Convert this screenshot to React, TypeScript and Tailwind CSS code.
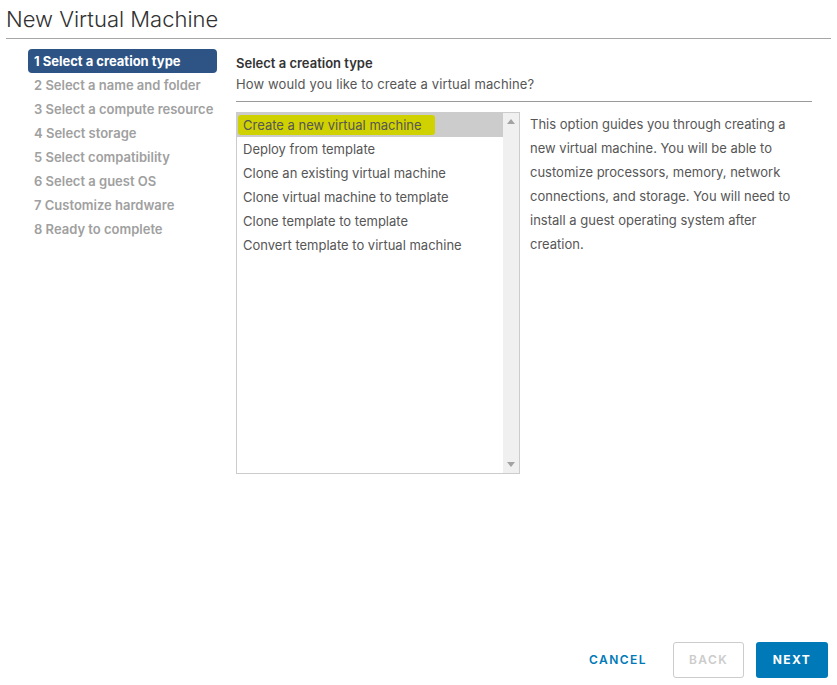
const STEPS = [
  "1 Select a creation type",
  "2 Select a name and folder",
  "3 Select a compute resource",
  "4 Select storage",
  "5 Select compatibility",
  "6 Select a guest OS",
  "7 Customize hardware",
  "8 Ready to complete",
];

const TYPES = [
  "Create a new virtual machine",
  "Deploy from template",
  "Clone an existing virtual machine",
  "Clone virtual machine to template",
  "Clone template to template",
  "Convert template to virtual machine",
];

export default function App() {
  return (
    <div className="flex h-[685px] w-[837px] flex-col bg-white font-['Inter',sans-serif] text-[13px] text-[#565656]">
      <div className="mx-[6px] border-b border-[#a6a6a6] pt-[4px] pb-[4px]">
        <h1 className="text-[22px] leading-[30px] font-light text-[#313131]">New Virtual Machine</h1>
      </div>

      <div className="flex flex-1 pt-[10px]">
        <ul className="ml-[28px] w-[189px] flex-none">
          {STEPS.map((s, i) => (
            <li
              key={s}
              className={
                i === 0
                  ? "rounded-[4px] bg-[#2d5484] px-[6px] leading-[24px] font-bold whitespace-nowrap text-white"
                  : "px-[6px] leading-[24px] font-semibold whitespace-nowrap text-[#a0a0a0]"
              }
            >
              {s}
            </li>
          ))}
        </ul>

        <div className="ml-[19px] w-[576px] flex-none">
          <div className="border-b border-[#9a9a9a] pt-[4px] pb-[6px]">
            <div className="leading-[20px] font-semibold text-[#333]">Select a creation type</div>
            <div className="leading-[22px] tracking-[0.01em]">How would you like to create a virtual machine?</div>
          </div>

          <div className="mt-[10px] flex">
            <div className="flex h-[362px] w-[284px] flex-none border border-[#cccccc]">
              <ul className="flex-1">
                {TYPES.map((t, i) => (
                  <li key={t} className={i === 0 ? "bg-[#cccccc] px-[6px] leading-[24px]" : "px-[6px] leading-[24px]"}>
                    {i === 0 ? (
                      <span className="-ml-[5px] inline-block rounded-[3px] bg-[#d0d100] pr-[13px] pl-[5px] leading-[20px]">{t}</span>
                    ) : (
                      t
                    )}
                  </li>
                ))}
              </ul>
              <div className="flex w-[16px] flex-none flex-col items-center justify-between bg-[#f0f0f0] py-[6px]">
                <svg width="8" height="5" viewBox="0 0 8 5"><path d="M0 5 4 0 8 5Z" fill="#a3a3a3" /></svg>
                <svg width="8" height="5" viewBox="0 0 8 5"><path d="M0 0 4 5 8 0Z" fill="#a3a3a3" /></svg>
              </div>
            </div>
            <p className="ml-[10px] w-[276px] leading-[24px]">
              This option guides you through creating a new virtual machine. You will be able to customize
              processors, memory, network connections, and storage. You will need to install a guest operating
              system after creation.
            </p>
          </div>
        </div>
      </div>

      <div className="flex items-center justify-end gap-[12px] pr-[9px] pb-[7px]">
        <button className="h-[36px] w-[72px] text-[12px] font-semibold tracking-[0.12em] text-[#0079b8]">CANCEL</button>
        <button className="ml-[7px] h-[36px] w-[71px] rounded-[3px] border border-[#cccccc] text-[12px] font-semibold tracking-[0.12em] text-[#cccccc]">
          BACK
        </button>
        <button className="h-[36px] w-[72px] rounded-[3px] bg-[#0079b8] text-[12px] font-bold tracking-[0.12em] text-white">
          NEXT
        </button>
      </div>
    </div>
  );
}
